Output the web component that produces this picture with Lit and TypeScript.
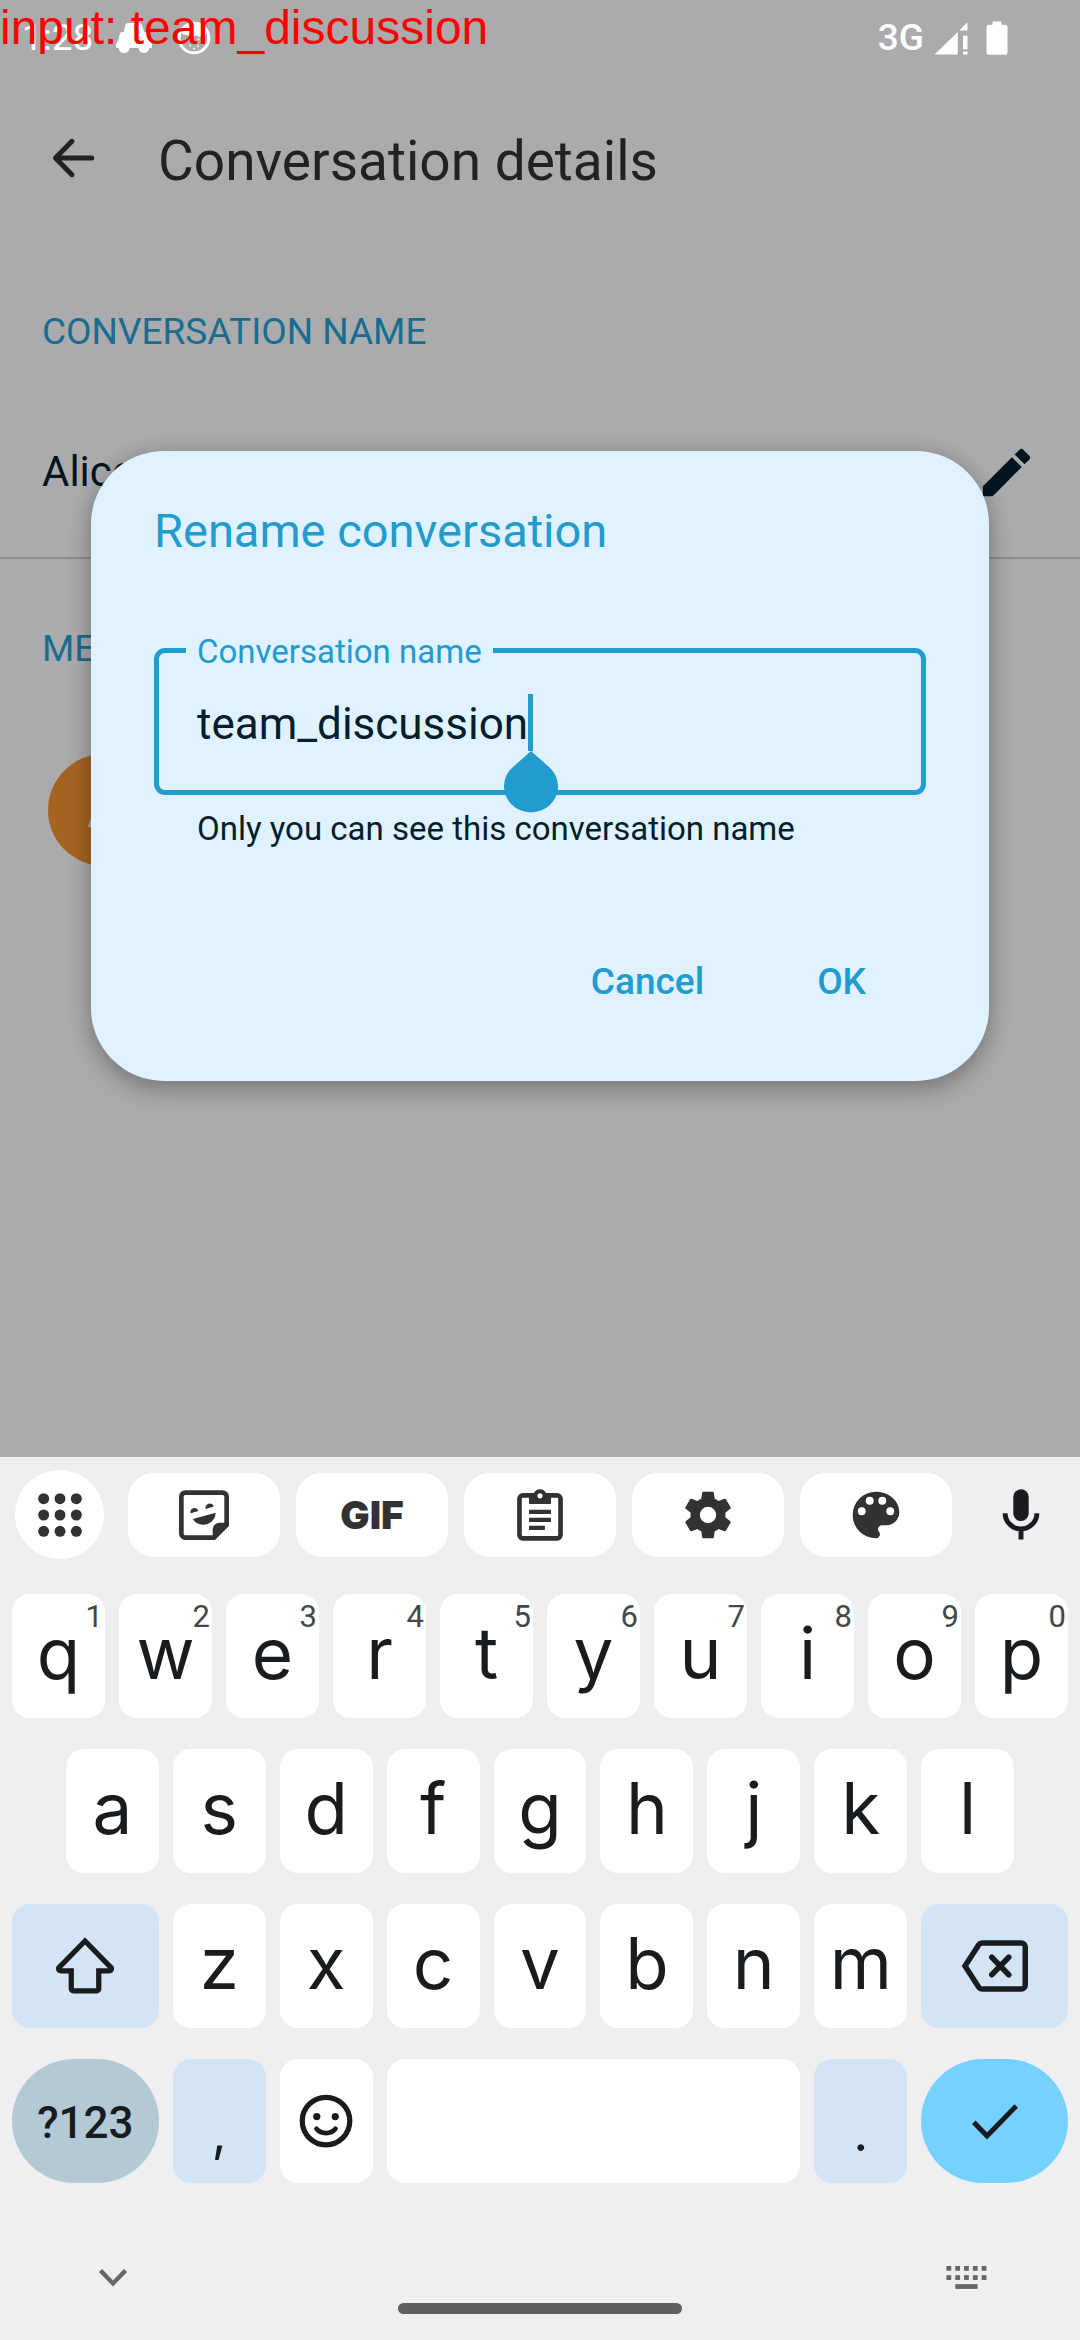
import { LitElement, html, svg, css, nothing } from "lit";
import { customElement, state, property } from "lit/decorators.js";

const icons = {
  back: svg`<path d="M21 12H4M11.500 4 3.600 12l7.900 8" fill="none" stroke="currentColor" stroke-width="2.400" stroke-linecap="round" stroke-linejoin="round"/>`,
  edit: svg`<path d="M3 17.25V21h3.75L17.81 9.94l-3.75-3.75L3 17.25zM20.71 7.04c.39-.39.39-1.02 0-1.41l-2.34-2.34c-.39-.39-1.02-.39-1.41 0l-1.83 1.83 3.75 3.75 1.83-1.83z"/>`,
  grid: svg`${[5, 12, 19].map((y) => [5, 12, 19].map((x) => svg`<circle cx=${x} cy=${y} r="2.35"/>`))}`,
  sticker: svg`<path d="M4 2.400h16a1.700 1.700 0 0 1 1.700 1.700v12.200l-5.400 5.400H4a1.700 1.700 0 0 1-1.700-1.700V4.100A1.700 1.700 0 0 1 4 2.400z" fill="none" stroke="currentColor" stroke-width="2"/><path d="M22 15.300H18.700a3 3 0 0 0-3 3V22zM6.300 11.300a1.700 1.700 0 0 1 3.300-1zM12.700 9.400a1.700 1.700 0 0 1 3.500-1zM7.200 13.700l9.800-2.700c-.3 5.600-7.500 6.800-9.800 2.700z"/>`,
  clipboard: svg`<path d="M4.700 3.600h14.600a1.500 1.500 0 0 1 1.500 1.500v15.400a1.500 1.500 0 0 1-1.500 1.500H4.700a1.500 1.500 0 0 1-1.500-1.500V5.100a1.500 1.500 0 0 1 1.500-1.500z" fill="none" stroke="currentColor" stroke-width="2"/><path d="M7.300 3H9.300a2.800 2.800 0 0 1 5.400 0h2v4.300H7.300zM7.300 9.800h9.400v1.800H7.300zM7.300 13.200h9.400V15H7.300zM7.300 16.600h6.800v1.800H7.300z"/><circle cx="12" cy="3.800" r="1.100" fill="#fff"/>`,
  gear: svg`<path fill-rule="evenodd" d="M19.430 12.980c.04-.32.07-.64.07-.98s-.03-.66-.07-.98l2.110-1.650c.19-.15.24-.42.12-.64l-2-3.460c-.12-.22-.39-.3-.61-.22l-2.490 1c-.52-.4-1.080-.73-1.690-.98l-.38-2.650C14.460 2.180 14.250 2 14 2h-4c-.25 0-.46.18-.49.42l-.38 2.650c-.61.25-1.170.59-1.690.98l-2.490-1c-.23-.09-.49 0-.61.22l-2 3.460c-.13.22-.07.49.12.64l2.110 1.650c-.04.32-.07.65-.07.98s.03.66.07.98l-2.110 1.650c-.19.15-.24.42-.12.64l2 3.460c.12.22.39.3.61.22l2.490-1c.52.4 1.080.73 1.690.98l.38 2.650c.03.24.24.42.49.42h4c.25 0 .46-.18.49-.42l.38-2.650c.61-.25 1.170-.59 1.690-.98l2.490 1c.23.09.49 0 .61-.22l2-3.460c.12-.22.07-.49-.12-.64l-2.110-1.650zM12 15.500a3.500 3.500 0 1 1 0-7 3.500 3.500 0 0 1 0 7z"/>`,
  palette: svg`<path fill-rule="evenodd" d="M12 2a10 10 0 0 0 0 20c1 0 1.700-.8 1.700-1.700 0-.45-.17-.83-.43-1.130-.25-.28-.42-.67-.42-1.100 0-.93.75-1.670 1.670-1.670H16.400c3.100 0 5.600-2.500 5.600-5.600C22 5.900 17.500 2 12 2zM5.900 12.100a1.700 1.700 0 1 1 0-3.400 1.700 1.700 0 0 1 0 3.400zM9.300 7.600a1.700 1.700 0 1 1 0-3.400 1.700 1.700 0 0 1 0 3.400zM14.700 7.600a1.700 1.700 0 1 1 0-3.400 1.700 1.700 0 0 1 0 3.400zM18.100 12.100a1.700 1.700 0 1 1 0-3.400 1.700 1.700 0 0 1 0 3.400z"/>`,
  mic: svg`<rect x="8.700" y="1" width="6.600" height="13.600" rx="3.300"/><path d="M5.200 11.200a6.800 6.800 0 0 0 13.600 0M12 17.800v4.700" fill="none" stroke="currentColor" stroke-width="2.100"/>`,
  shift: svg`<path d="M12 2 1.700 12.500a.8.8 0 0 0 .5 1.400h4.300v7.200a.8.800 0 0 0 .8.800h9.400a.8.800 0 0 0 .8-.8v-7.200h4.300a.8.800 0 0 0 .5-1.400z" fill="none" stroke="currentColor" stroke-width="2.100"/>`,
  backspace: svg`<path d="M6.800 2.800h15.700a1.600 1.600 0 0 1 1.600 1.600v15.200a1.600 1.600 0 0 1-1.600 1.600H6.800a1.600 1.600 0 0 1-1.300-.7L0 12l5.500-8.500a1.600 1.600 0 0 1 1.300-.7zM10.700 8.500l6.800 7M17.500 8.500l-6.800 7" fill="none" stroke="currentColor" stroke-width="2.200" stroke-linecap="round"/>`,
  smile: svg`<circle cx="12" cy="12" r="9.500" fill="none" stroke="currentColor" stroke-width="2.100"/><circle cx="8.300" cy="10.200" r="1.450"/><circle cx="15.700" cy="10.200" r="1.450"/><path d="M8.200 15.100c1.900 2.300 5.700 2.300 7.600 0" fill="none" stroke="currentColor" stroke-width="1.900" stroke-linecap="round"/>`,
  check: svg`<path d="m3.500 12.500 5.300 5.500L20.500 6" fill="none" stroke="currentColor" stroke-width="2"/>`,
  chevron: svg`<path d="m5.200 8.500 6.800 7 6.800-7" fill="none" stroke="currentColor" stroke-width="2.400"/>`,
  keyboard: svg`${[6, 11].map((y) => [0.800, 5.600, 10.400, 15.200, 20].map((x) => svg`<rect x=${x} y=${y} width="2.600" height="2.600"/>`))}<rect x="5.600" y="15.900" width="12.200" height="2.600"/>`,
  car: svg`<path d="M6.200 3.400Q6.500 2 8 2h7.600q1.200 0 1.700 1.300L18.800 8h1.400q1 0 1.300 1l.7 3.600 1.600 3q.4 1.400 0 3H.2q-.4-1.600 0-3l1.600-2.600.7-3.600Q2.800 8 4 8h1.200z"/><circle cx="5.400" cy="18.400" r="3.600"/><circle cx="18.600" cy="18.400" r="3.600"/>`,
  cookie: svg`<circle cx="12" cy="12" r="9.900" fill="none" stroke="currentColor" stroke-width="2"/><path d="M4 9C6 1 18 1 20 9c-1 2-2.500 1-3.500 2s-2.500-1.500-4-.5-3 1.500-4.500 0S5 10.500 4 9z"/>${[[7, 14], [9.500, 17], [12, 14], [14.500, 17.500], [17, 14], [12, 19], [9, 12.500], [15, 13]].map(([x, y]) => svg`<circle cx=${x} cy=${y} r=".6"/>`)}`,
  signal: svg`<path d="M1 23 16.500 8v15zM17.500 7 23 1.500V7zM20 10.500h3v9h-3zM20 21h3v2h-3z"/>`,
  battery: svg`<path d="M9 1h6v2.200h2.500a1.500 1.500 0 0 1 1.500 1.500v17a1.500 1.500 0 0 1-1.500 1.500h-11A1.500 1.500 0 0 1 5 21.700v-17a1.500 1.500 0 0 1 1.500-1.500H9z"/>`,
};
type IconName = keyof typeof icons;

@customElement("ui-icon")
export class UiIcon extends LitElement {
  @property() name: IconName = "back";
  static styles = css`
    :host { display: inline-flex; flex: none; width: 60px; height: 60px; }
    svg { width: 100%; height: 100%; fill: currentColor; overflow: visible; }
  `;
  render() {
    return html`<svg viewBox="0 0 24 24" aria-hidden="true">${icons[this.name]}</svg>`;
  }
}

@customElement("status-bar")
export class StatusBar extends LitElement {
  static styles = css`
    :host { display: flex; align-items: center; justify-content: space-between; height: 74px; padding: 2px 64px 0 22px; box-sizing: border-box; color: #fff; font: 400 37px/44px Roboto, sans-serif; }
    .side { display: flex; align-items: center; }
    .left { gap: 22px; }
    .right { gap: 8px; font-weight: 500; }
    .glyph { width: 38px; height: 36px; }
  `;
  render() {
    return html`
      <div class="side left"><span>1:28</span><ui-icon class="glyph" name="car"></ui-icon><ui-icon class="glyph" name="cookie"></ui-icon></div>
      <div class="side right"><span>3G</span><ui-icon class="glyph" name="signal"></ui-icon><ui-icon class="glyph" name="battery"></ui-icon></div>
    `;
  }
}

@customElement("rename-dialog")
export class RenameDialog extends LitElement {
  @state() private value = "team_discussion";
  static styles = css`
    :host { display: block; width: 100%; color: #001e2c; font-family: Roboto, sans-serif; }
    .dialog { box-sizing: border-box; padding: 52px 63px 51px; border-radius: 73px; background: #e0f2ff; box-shadow: 0 10px 24px rgba(0, 0, 0, 0.24), 0 0 20px rgba(0, 0, 0, 0.12); }
    h2 { margin: 0 0 71px; color: #229bce; font-size: 47px; line-height: 56px; font-weight: 400; }
    fieldset { margin: 0; min-width: 0; padding: 0 38px; border: 5px solid #229bce; border-radius: 11px; }
    legend { margin-left: -11px; padding: 3px 11px 0; color: #229bce; font-size: 33px; line-height: 38px; }
    .entry { display: flex; padding: 23px 0 39px; }
    input { field-sizing: content; box-sizing: border-box; min-width: 0; height: 57px; padding: 4px 0 0; border: 0; outline: 0; background: none; color: inherit; caret-color: transparent; font: 400 44px/53px Roboto, sans-serif; }
    .caret { position: relative; flex: none; width: 5px; background: #229bce; }
    .handle { position: absolute; top: 57px; left: 50%; width: 54px; height: 64px; margin-left: -27px; color: #229bce; }
    p { margin: 13px 0 84px; padding-left: 43px; font-size: 33px; line-height: 42px; }
    .actions { display: flex; justify-content: flex-end; gap: 49px; padding-right: 28px; }
    button { height: 96px; padding: 0 32px; border: 0; background: none; color: #229bce; font: 500 37px/48px Roboto, sans-serif; }
  `;
  private onInput(e: Event) {
    this.value = (e.target as HTMLInputElement).value;
  }
  render() {
    return html`
      <section class="dialog" role="dialog" aria-labelledby="title">
        <h2 id="title">Rename conversation</h2>
        <fieldset>
          <legend><label for="name">Conversation name</label></legend>
          <div class="entry">
            <input id="name" type="text" .value=${this.value} @input=${this.onInput} aria-describedby="hint" />
            <span class="caret"><svg class="handle" viewBox="0 0 54 64" aria-hidden="true"><path d="M27 0 45 16A27 26 0 1 1 9 16z" fill="currentColor"/></svg></span>
          </div>
        </fieldset>
        <p id="hint">Only you can see this conversation name</p>
        <div class="actions"><button type="button">Cancel</button><button type="button">OK</button></div>
      </section>
    `;
  }
}

@customElement("soft-keyboard")
export class SoftKeyboard extends LitElement {
  static styles = css`
    :host { display: block; background: #efeff1; color: #191c1e; font-family: Inter, sans-serif; }
    button { display: flex; align-items: center; justify-content: center; min-width: 0; padding: 0; border: 0; background: #fff; color: inherit; font-family: inherit; }
    .tools { display: flex; align-items: center; gap: 16px; padding: 13px 22px 35px 15px; color: #323232; }
    .tool { flex: 1; height: 84px; border-radius: 26px; font-size: 39px; font-weight: 900; }
    .apps { flex: none; width: 89px; height: 89px; margin-right: 8px; border-radius: 50%; }
    .voice { flex: none; width: 74px; height: 84px; margin-left: 16px; background: none; color: #191c1e; }
    .t56 { width: 56px; height: 56px; }
    .keys { display: grid; gap: 31px; padding: 0 12px; }
    .row { display: flex; gap: 14px; }
    .inset { padding: 0 54px; }
    .key { position: relative; box-sizing: border-box; flex: 93 1 0; height: 124px; padding-bottom: 6px; border-radius: 18px; font-size: 71px; line-height: 88px; }
    .wide { flex-grow: 147; padding-bottom: 0; }
    .space { flex-grow: 414; }
    .pale { background: #d3e5f4; }
    .glyph { padding-bottom: 0; }
    .punct { padding: 24px 0 0; font-size: 52px; }
    .round { border-radius: 62px; }
    .mode { padding-top: 4px; background: #b4c9d6; font: 500 44px/56px Roboto, sans-serif; }
    .enter { background: #76d1ff; }
    .hint { position: absolute; top: 8px; right: 2px; color: #444749; font: 400 31px/30px Roboto, sans-serif; }
    .nav { display: flex; align-items: flex-start; justify-content: space-between; min-height: 61px; padding: 70px 83px 26px; color: #666; }
    .nav button { width: 60px; height: 48px; background: none; }
    .t44 { width: 44px; height: 44px; }
    .home { align-self: flex-end; width: 284px; height: 11px; border-radius: 6px; background: #5f5f5f; }
  `;
  private letters(chars: string, hints = "") {
    return [...chars].map((c, i) => html`<button class="key" type="button">${c}${hints ? html`<span class="hint">${hints[i]}</span>` : nothing}</button>`);
  }
  private tool(label: string, name: IconName) {
    return html`<button class="tool" type="button" aria-label=${label}><ui-icon class="t56" name=${name}></ui-icon></button>`;
  }
  render() {
    return html`
      <div class="tools">
        <button class="apps" type="button" aria-label="More tools"><ui-icon class="t56" name="grid"></ui-icon></button>
        ${this.tool("Stickers", "sticker")}
        <button class="tool" type="button">GIF</button>
        ${this.tool("Clipboard", "clipboard")} ${this.tool("Settings", "gear")} ${this.tool("Theme", "palette")}
        <button class="voice" type="button" aria-label="Voice input"><ui-icon class="t56" name="mic"></ui-icon></button>
      </div>
      <div class="keys">
        <div class="row">${this.letters("qwertyuiop", "1234567890")}</div>
        <div class="row inset">${this.letters("asdfghjkl")}</div>
        <div class="row">
          <button class="key wide pale" type="button" aria-label="Shift"><ui-icon name="shift"></ui-icon></button>
          ${this.letters("zxcvbnm")}
          <button class="key wide pale" type="button" aria-label="Backspace"><ui-icon name="backspace"></ui-icon></button>
        </div>
        <div class="row">
          <button class="key wide round mode" type="button">?123</button>
          <button class="key pale punct" type="button">,</button>
          <button class="key glyph" type="button" aria-label="Emoji"><ui-icon name="smile"></ui-icon></button>
          <button class="key space" type="button" aria-label="Space"></button>
          <button class="key pale punct" type="button">.</button>
          <button class="key wide round enter" type="button" aria-label="Done"><ui-icon name="check"></ui-icon></button>
        </div>
      </div>
      <div class="nav">
        <button type="button" aria-label="Hide keyboard"><ui-icon class="t44" name="chevron"></ui-icon></button>
        <span class="home"></span>
        <button type="button" aria-label="Switch keyboard"><ui-icon class="t44" name="keyboard"></ui-icon></button>
      </div>
    `;
  }
}

@customElement("app-root")
export class AppRoot extends LitElement {
  static styles = css`
    :host { display: flex; flex-direction: column; min-height: 100vh; background: #ababad; font-family: Roboto, sans-serif; }
    .screen { position: relative; flex: 1; }
    .bar { display: flex; align-items: center; gap: 60px; height: 168px; padding: 0 48px; color: #222; }
    .bar button, .name button { display: flex; padding: 0; border: 0; background: none; color: inherit; }
    h1 { margin: 6px 0 0; font-size: 55px; line-height: 64px; font-weight: 400; }
    h2 { margin: 0; padding: 66px 42px 31px; color: #196d90; font-size: 37px; line-height: 48px; font-weight: 400; text-transform: uppercase; }
    .name { display: flex; align-items: center; justify-content: space-between; height: 170px; padding: 0 42px; border-bottom: 2px solid #8c8c8e; color: #00151f; font-size: 42px; line-height: 56px; }
    .edit { width: 63px; height: 63px; }
    .member { padding: 50px 48px; }
    .avatar { display: flex; align-items: center; justify-content: center; width: 112px; height: 112px; border-radius: 50%; background: #a66423; color: #ababad; font-size: 52px; line-height: 56px; }
    .overlay { position: absolute; inset: 74px 0 0; display: flex; align-items: center; padding: 0 91px; }
    .echo { position: absolute; top: 0; left: 0; color: #f00; font: 48px/56px "Liberation Sans", Arial, sans-serif; white-space: nowrap; }
    .arrow { width: 50px; height: 50px; }
  `;
  render() {
    return html`
      <main class="screen">
        <status-bar></status-bar>
        <header class="bar"><button type="button" aria-label="Back"><ui-icon class="arrow" name="back"></ui-icon></button><h1>Conversation details</h1></header>
        <h2>Conversation name</h2>
        <div class="name"><span>Alice</span><button type="button" aria-label="Edit name"><ui-icon class="edit" name="edit"></ui-icon></button></div>
        <h2>Members</h2>
        <div class="member"><div class="avatar">A</div></div>
        <div class="overlay"><rename-dialog></rename-dialog></div>
        <div class="echo">input: team_discussion</div>
      </main>
      <soft-keyboard></soft-keyboard>
    `;
  }
}
